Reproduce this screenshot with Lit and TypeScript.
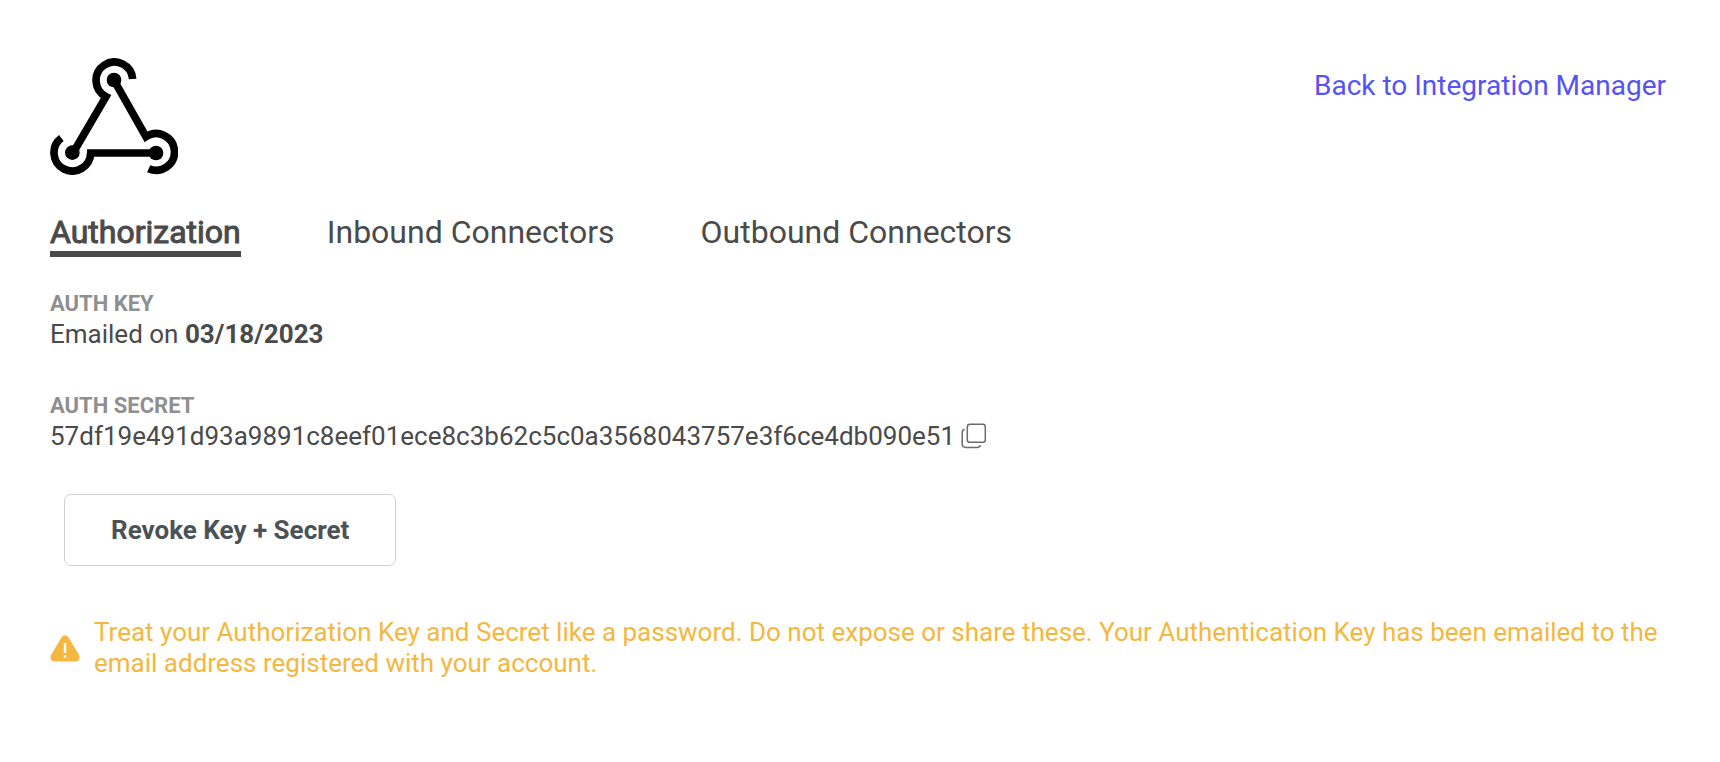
import { LitElement, html, css, svg } from "lit";
import { customElement, state } from "lit/decorators.js";

const logo = svg`
  <svg class="logo" viewBox="30 24 384 351" role="img" aria-label="Webhooks">
    <g fill="none" stroke="#000" stroke-width="23">
      <path d="M278 87A55 55 0 1 0 198 140L106 297" />
      <path d="M226 98L318 260A55 55 0 1 1 326 356" />
      <path d="M64 264A55 55 0 1 0 152 309" />
      <path d="M141 309H348" />
    </g>
    <circle cx="222" cy="90" r="22" />
    <circle cx="97" cy="308" r="22" />
    <circle cx="348" cy="309" r="22" />
  </svg>`;

const copyIcon = svg`
  <svg class="copy-icon" viewBox="0 0 26 26" fill="none" stroke="#6b6b6b" stroke-width="1.5" aria-hidden="true">
    <rect x="6.3" y="1.3" width="18" height="18" rx="2.6" />
    <path d="M3.6 6.3C2 6.6 1.2 7.3 1.2 9V20.8C1.2 23.4 2.2 24.4 4.8 24.4H16C18 24.4 18.9 23.8 19.4 22.2" />
  </svg>`;

const warningIcon = svg`
  <svg class="warning-icon" viewBox="0 0 30 27" aria-hidden="true">
    <path fill="#f4b740" d="M11.7 2Q15 -1.6 18.2 2L29 20Q30.8 26.4 25 26.6H5Q-.8 26.4 1 20Z" />
    <path stroke="#fff" stroke-width="2.4" d="M15 8V18M15 20.2V22.8" />
  </svg>`;

@customElement("app-root")
export class AppRoot extends LitElement {
  static styles = css`
    :host {
      display: block;
      box-sizing: border-box;
      min-height: 100vh;
      padding: 58px 54px 70px 50px;
      background: #fff;
      color: #4a4a4a;
      font-family: Roboto, "Liberation Sans", sans-serif;
      font-size: 26px;
      line-height: 31px;
    }
    .header {
      display: flex;
      justify-content: space-between;
      align-items: flex-start;
    }
    .logo {
      display: block;
      width: 128px;
      height: 117px;
    }
    .back {
      margin-top: 11px;
      color: #5653f5;
      font-size: 28px;
      line-height: 34px;
      text-decoration: none;
    }
    .tabs {
      display: flex;
      gap: 86px;
      margin-top: 38px;
    }
    button {
      font: inherit;
      color: inherit;
      background: none;
      border: 0;
      padding: 0;
      cursor: pointer;
    }
    .tab {
      border-bottom: 6px solid transparent;
      font-size: 32px;
      line-height: 38px;
    }
    .tab.active {
      border-color: #4a4a4a;
      -webkit-text-stroke: 1px #4a4a4a;
    }
    .fields {
      margin: 32px 0 0;
      display: grid;
      gap: 42px;
    }
    .label {
      color: #8f8f8f;
      font-size: 22px;
      line-height: 30px;
      font-weight: 700;
      text-transform: uppercase;
    }
    .value {
      margin: 0;
      line-height: 30px;
    }
    .secret {
      display: flex;
      align-items: center;
      gap: 6px;
      overflow-wrap: anywhere;
    }
    .copy-icon {
      display: block;
      width: 26px;
      height: 26px;
    }
    .revoke {
      margin: 43px 0 0 14px;
      padding: 20px 46px;
      border: 1px solid #d0d1d2;
      border-radius: 7px;
      color: #4b5255;
      font-weight: 700;
      line-height: 30px;
    }
    .alert {
      display: flex;
      align-items: center;
      gap: 14px;
      margin-top: 51px;
      color: #f4b740;
    }
    .alert p {
      margin: 0;
    }
    .warning-icon {
      flex: none;
      width: 30px;
      height: 27px;
    }
  `;

  @state() private active = 0;

  private tabs = ["Authorization", "Inbound Connectors", "Outbound Connectors"];
  private secret = "57df19e491d93a9891c8eef01ece8c3b62c5c0a3568043757e3f6ce4db090e51";

  render() {
    return html`
      <header class="header">
        ${logo}
        <a class="back" href="#integrations">Back to Integration Manager</a>
      </header>
      <nav class="tabs" role="tablist">
        ${this.tabs.map(
          (name, i) => html`<button
            class="tab ${i === this.active ? "active" : ""}"
            role="tab"
            aria-selected=${i === this.active}
            @click=${() => (this.active = i)}
          >${name}</button>`
        )}
      </nav>
      <main>
        <dl class="fields">
          <div>
            <dt class="label">Auth Key</dt>
            <dd class="value">Emailed on <b>03/18/2023</b></dd>
          </div>
          <div>
            <dt class="label">Auth Secret</dt>
            <dd class="value secret">
              <span>${this.secret}</span>
              <button
                class="copy"
                aria-label="Copy secret"
                @click=${() => navigator.clipboard?.writeText(this.secret)}
              >${copyIcon}</button>
            </dd>
          </div>
        </dl>
        <button class="revoke">Revoke Key + Secret</button>
        <div class="alert" role="note">
          ${warningIcon}
          <p>Treat your Authorization Key and Secret like a password. Do not expose or share these. Your Authentication Key has been emailed to the email address registered with your account.</p>
        </div>
      </main>
    `;
  }
}
